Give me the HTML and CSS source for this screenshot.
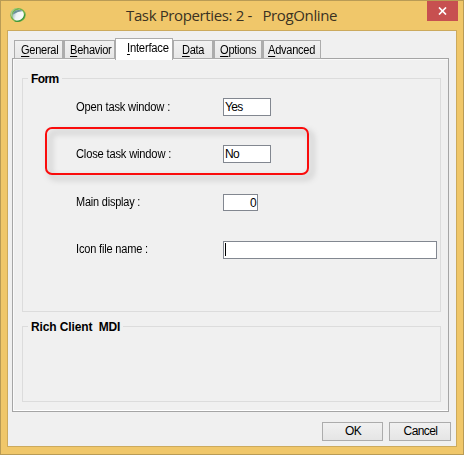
FILE: index.html
```html
<!DOCTYPE html>
<html lang="en">
<head>
<meta charset="utf-8">
<title>Task Properties</title>
<link rel="stylesheet" href="styles.css">
</head>
<body>
<div class="window">
  <header class="titlebar">
    <svg class="logo" width="16" height="16" viewBox="0 0 16 16">
      <defs><linearGradient id="lens" x1="0" y1="0" x2="1" y2="1"><stop offset="0" stop-color="#7d9fa6"/><stop offset=".4" stop-color="#edf4f5"/><stop offset="1" stop-color="#fff"/></linearGradient></defs>
      <ellipse cx="8" cy="8" rx="7.7" ry="7" fill="#72b34b"/>
      <path d="M.8 5Q3 .8 8 1Q4 2 2.4 5Q1.5 8 3 11Q0 9 .8 5Z" fill="#a6cd8b"/>
      <path d="M15.2 5Q16 11 11 14Q7 16 4 14Q10 14 13 10Q15 7 15.2 5Z" fill="#3e963d"/>
      <ellipse cx="8" cy="8.2" rx="6" ry="5.1" transform="rotate(-32 8 8)" fill="url(#lens)"/>
      <path d="M3 7.5Q3 3.5 8 3Q11 2.6 13 4Q8 4 3 7.5Z" fill="#6b929a"/>
    </svg>
    <h1 class="title">Task Properties: 2 - &nbsp; ProgOnline</h1>
    <button class="close" aria-label="Close"><svg width="9" height="8" viewBox="0 0 9 8"><path d="M1 .5L8 7.5M8 .5L1 7.5" stroke="#fff" stroke-width="1.7"/></svg></button>
  </header>
  <main class="client">
    <nav class="tabs">
      <span class="tab general"><span><u>G</u>eneral</span></span>
      <span class="tab behavior"><span><u>B</u>ehavior</span></span>
      <span class="tab active"><span><u>I</u>nterface</span></span>
      <span class="tab data"><span><u>D</u>ata</span></span>
      <span class="tab options"><span><u>O</u>ptions</span></span>
      <span class="tab advanced"><span><u>A</u>dvanced</span></span>
    </nav>
    <section class="panel">
      <div class="group form">
        <h2 class="legend legend-form">Form</h2>
        <div class="row open"><label>Open task window :</label><div class="field">Yes</div></div>
        <div class="row shut"><label>Close task window :</label><div class="field">No</div><div class="highlight"></div></div>
        <div class="row display"><label>Main display :</label><div class="field number">0</div></div>
        <div class="row icon"><label>Icon file name :</label><div class="field wide"><i class="caret"></i></div></div>
      </div>
      <div class="group rich"><h2 class="legend legend-rich">Rich Client&nbsp; MDI</h2></div>
    </section>
    <footer class="actions">
      <button class="btn ok">OK</button>
      <button class="btn cancel"><span>Cancel</span></button>
    </footer>
  </main>
</div>
</body>
</html>
```

FILE: styles.css
```css
* { box-sizing: border-box; }
body { margin: 0; font: 12px/14px "Liberation Sans", Arial, sans-serif; color: #000; }
.window { width: 464px; height: 455px; background: #f0c76a; border: 1px solid #b99b55; padding: 0 6px 7px; display: flex; flex-direction: column; }
.titlebar { height: 29px; flex: none; display: flex; align-items: flex-start; }
.logo { margin: 6px 0 0 3px; flex: none; }
.title { font: 15px/20px "Open Sans", sans-serif; letter-spacing: -.37px; color: #3b3222; margin: 4px 0 0 100px; width: 260px; flex: none; white-space: nowrap; }
.close { border: 0; padding: 0; margin-left: auto; margin-right: -1px; width: 31px; height: 20px; background: #c75050; display: flex; align-items: center; justify-content: center; }
.client { flex: 1; background: #f0f0f0; border: 1px solid #ccaa5d; padding: 7px 7px 0 4px; display: flex; flex-direction: column; }
.tabs { height: 20px; flex: none; display: flex; align-items: flex-end; padding-left: 2px; position: relative; z-index: 1; }
.tab { height: 19px; margin-bottom: -1px; border: 1px solid #acacac; background: linear-gradient(#f1f1f1, #e7e7e7); padding: 2px 0 0 6px; white-space: nowrap; letter-spacing: -.3px; }
.tab span { display: inline-block; transform: scaleX(.92); transform-origin: left; }
u { text-decoration: underline; text-decoration-thickness: 1px; text-underline-offset: 2px; text-decoration-skip-ink: none; }
.general { width: 49px; }
.behavior { width: 52px; padding-left: 7px; }
.active { width: 58px; height: 22px; margin: 0 0 -2px; padding: 2px 0 0 11px; background: #fff; border-bottom: 0; letter-spacing: -.25px; }
.active span { transform: scaleX(.94); }
.data { width: 40px; padding-left: 8px; }
.options { width: 49px; padding-left: 7px; }
.advanced { width: 59px; padding-left: 6px; }
.tab + .tab:not(.active):not(.data) { border-left-width: 2px; padding-right: 0; }
.tab.options, .tab.advanced, .tab.behavior { text-indent: -1px; }
.panel { height: 354px; flex: none; border: 1px solid #a5a5a5; box-shadow: inset 1px 1px #fafafa, inset 0 -1px #fff; padding: 19px 7px 0 9px; }
.group { border: 1px solid #dcdcdc; position: relative; }
.form { height: 234px; padding-top: 19px; }
.rich { height: 76px; margin-top: 14px; }
.legend { position: absolute; left: 5px; top: -7px; margin: 0; padding: 0 3px; background: #f0f0f0; font: bold 12px/15px "Liberation Sans", sans-serif; white-space: nowrap; }
.legend-form { letter-spacing: -.6px; }
.legend-rich { letter-spacing: -.13px; }
.row { display: flex; position: relative; height: 19px; padding-left: 53px; }
.shut { margin-top: 28px; }
.display { margin-top: 30px; }
.icon { margin-top: 28px; }
.row label { width: 147px; flex: none; padding-top: 2px; white-space: nowrap; letter-spacing: -.2px; transform: scaleX(.93); transform-origin: left; }
.display label { padding-top: 1px; transform: scaleX(.91); }
.icon label { padding-top: 1px; transform: scaleX(.92); }
.field { width: 48px; height: 18px; border: 1px solid #828790; background: #fff; padding: 1px; letter-spacing: -.7px; }
.number { width: 35px; height: 17px; padding-top: 1px; text-align: right; }
.wide { width: 214px; }
.caret { display: block; width: 1px; height: 13px; background: #000; }
.highlight { position: absolute; left: 22px; top: -18px; width: 264px; height: 48px; border: 2px solid #fa0c0c; border-radius: 7px; filter: drop-shadow(4px 4px 3px rgba(0,0,0,.3)); }
.actions { display: flex; justify-content: flex-end; gap: 6px; margin: 10px -2px 0 0; }
.btn { height: 19px; border: 1px solid #acacac; background: linear-gradient(#f1f1f1, #e5e5e5); padding: 0 0 0 1px; font: 12px/17px "Liberation Sans", sans-serif; color: #000; }
.ok { width: 61px; letter-spacing: -.6px; }
.cancel { width: 62px; letter-spacing: -.6px; }
```
